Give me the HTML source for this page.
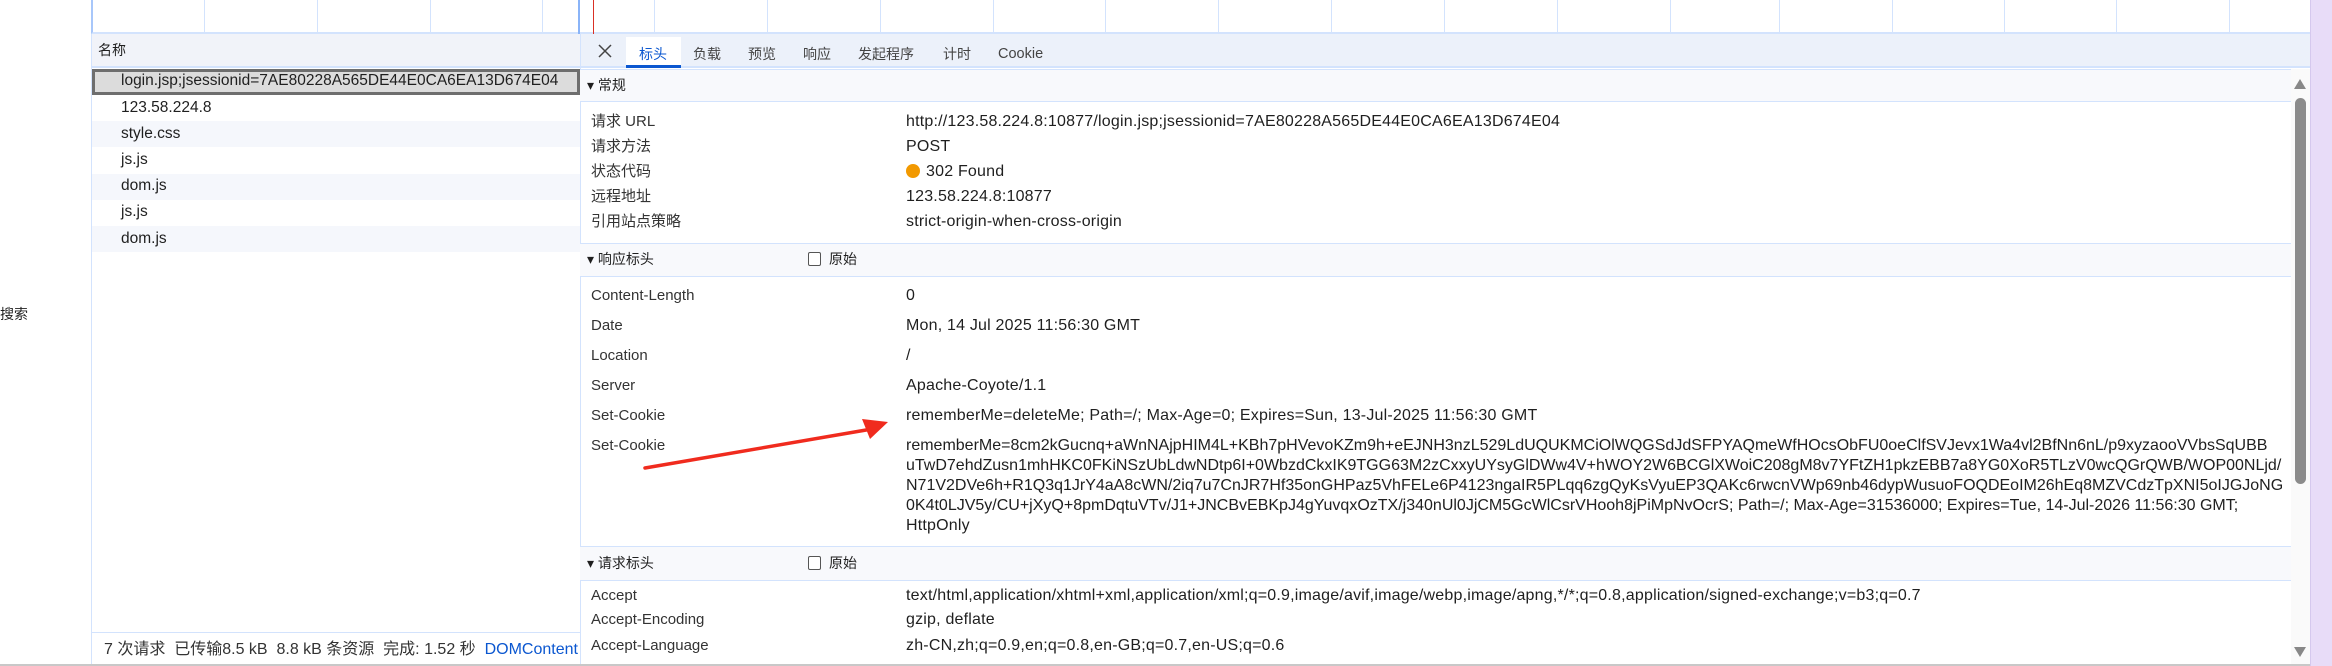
<!DOCTYPE html>
<html><head><meta charset="utf-8"><style>
*{margin:0;padding:0;box-sizing:border-box}
body{width:2332px;height:666px;overflow:hidden;background:#fff;font-family:"Liberation Sans","Noto Sans CJK SC",sans-serif;font-size:15px;color:#1f1f1f;position:relative}
.a{position:absolute;white-space:nowrap;line-height:20px}
.vl{position:absolute;top:0;height:34px;width:1px;background:#d3e3fd}
.row{position:absolute;left:92px;width:488px;height:26px}
.lbl{position:absolute;left:591px;white-space:nowrap;font-size:15px;color:#333;line-height:20px}
.val{position:absolute;left:906px;white-space:nowrap;line-height:20px;font-size:16px;letter-spacing:0.2px}
.ck{letter-spacing:0}
.li{font-size:15.5px}
.sec{position:absolute;left:580px;width:1711px;background:#f8f9fc;border-top:1px solid #d3e3fd;border-bottom:1px solid #d3e3fd}
.cb{position:absolute;width:13px;height:14px;border:1.5px solid #555;border-radius:2px;background:#fff}
</style></head><body>
<div class="a" style="left:0;top:304px;font-size:14px">搜索</div>
<div style="position:absolute;left:91px;top:0;width:2219px;height:34px;border-left:2px solid #a8c7fa;border-bottom:2px solid #d3e3fd"></div>
<div class="vl" style="left:204px"></div><div class="vl" style="left:317px"></div><div class="vl" style="left:430px"></div><div class="vl" style="left:542px"></div>
<div class="vl" style="left:578px;width:2px;background:#8ab4f8"></div><div class="vl" style="left:593px;background:#d93025"></div>
<div class="vl" style="left:654px"></div><div class="vl" style="left:767px"></div><div class="vl" style="left:880px"></div><div class="vl" style="left:993px"></div><div class="vl" style="left:1105px"></div><div class="vl" style="left:1218px"></div><div class="vl" style="left:1331px"></div><div class="vl" style="left:1444px"></div><div class="vl" style="left:1557px"></div><div class="vl" style="left:1670px"></div><div class="vl" style="left:1779px"></div><div class="vl" style="left:1892px"></div><div class="vl" style="left:2004px"></div><div class="vl" style="left:2116px"></div><div class="vl" style="left:2229px"></div>
<div style="position:absolute;left:91px;top:34px;width:1px;height:632px;background:#d3e3fd"></div>
<div style="position:absolute;left:92px;top:34px;width:488px;height:34px;background:#f1f3f9;border-bottom:2px solid #d3e3fd"></div>
<div class="a" style="left:98px;top:40px;font-size:14px">名称</div>
<div class="row" style="top:69px;background:#dcdcdc;border:3px solid #6e6e6e"></div>
<div class="a li" style="left:121px;top:71px">login.jsp;jsessionid=7AE80228A565DE44E0CA6EA13D674E04</div>
<div class="a li" style="left:121px;top:98px">123.58.224.8</div>
<div class="row" style="top:121px;background:#f5f7fc"></div><div class="a li" style="left:121px;top:124px">style.css</div>
<div class="a li" style="left:121px;top:150px">js.js</div>
<div class="row" style="top:174px;background:#f5f7fc"></div><div class="a li" style="left:121px;top:176px">dom.js</div>
<div class="a li" style="left:121px;top:202px">js.js</div>
<div class="row" style="top:226px;background:#f5f7fc"></div><div class="a li" style="left:121px;top:229px">dom.js</div>
<div style="position:absolute;left:92px;top:632px;width:488px;height:34px;border-top:1px solid #d3e3fd;border-bottom:2px solid #c8c8c8"></div>
<div class="a" style="left:104px;top:640px;font-size:16px;color:#333">7 次请求 &nbsp;已传输8.5 kB &nbsp;8.8 kB 条资源 &nbsp;完成: 1.52 秒 &nbsp;<span style="color:#0b57d0">DOMContent</span></div>
<div style="position:absolute;left:580px;top:34px;width:1px;height:632px;background:#d3e3fd"></div>
<div style="position:absolute;left:581px;top:34px;width:1729px;height:34px;background:#ecf1fa;border-bottom:2px solid #d3e3fd"></div>
<svg style="position:absolute;left:597px;top:43px" width="16" height="16"><path d="M2 2L14 14M14 2L2 14" stroke="#444" stroke-width="1.5"/></svg>
<div style="position:absolute;left:626px;top:37px;width:55px;height:31px;background:#fff;border-bottom:3px solid #0b57d0"></div>
<div class="a" style="left:639px;top:44px;font-size:14px;color:#0b57d0">标头</div>
<div class="a" style="left:693px;top:44px;font-size:14px;color:#444">负载</div>
<div class="a" style="left:748px;top:44px;font-size:14px;color:#444">预览</div>
<div class="a" style="left:803px;top:44px;font-size:14px;color:#444">响应</div>
<div class="a" style="left:858px;top:44px;font-size:14px;color:#444">发起程序</div>
<div class="a" style="left:943px;top:44px;font-size:14px;color:#444">计时</div>
<div class="a" style="left:998px;top:44px;font-size:14.5px;color:#444">Cookie</div>
<div class="sec" style="top:69px;height:33px"></div>
<div class="a" style="left:587px;top:75px;font-size:14px">▾ 常规</div>
<div class="lbl" style="top:112px">请求 URL</div><div class="val" style="top:112px">http://123.58.224.8:10877/login.jsp;jsessionid=7AE80228A565DE44E0CA6EA13D674E04</div>
<div class="lbl" style="top:137px">请求方法</div><div class="val" style="top:137px">POST</div>
<div class="lbl" style="top:162px">状态代码</div><div class="val" style="top:162px"><span style="display:inline-block;width:14px;height:14px;border-radius:50%;background:#f29900;vertical-align:-2px;margin-right:6px"></span>302 Found</div>
<div class="lbl" style="top:187px">远程地址</div><div class="val" style="top:187px">123.58.224.8:10877</div>
<div class="lbl" style="top:212px">引用站点策略</div><div class="val" style="top:212px">strict-origin-when-cross-origin</div>
<div class="sec" style="top:243px;height:34px"></div>
<div class="a" style="left:587px;top:249px;font-size:14px">▾ 响应标头</div>
<div class="cb" style="left:808px;top:252px"></div><div class="a" style="left:829px;top:249px;font-size:14px">原始</div>
<div class="lbl" style="top:286px">Content-Length</div><div class="val" style="top:286px">0</div>
<div class="lbl" style="top:316px">Date</div><div class="val" style="top:316px">Mon, 14 Jul 2025 11:56:30 GMT</div>
<div class="lbl" style="top:346px">Location</div><div class="val" style="top:346px">/</div>
<div class="lbl" style="top:376px">Server</div><div class="val" style="top:376px">Apache-Coyote/1.1</div>
<div class="lbl" style="top:406px">Set-Cookie</div><div class="val" style="top:406px">rememberMe=deleteMe; Path=/; Max-Age=0; Expires=Sun, 13-Jul-2025 11:56:30 GMT</div>
<div class="lbl" style="top:436px">Set-Cookie</div>
<div class="val ck" style="top:436px">rememberMe=8cm2kGucnq+aWnNAjpHIM4L+KBh7pHVevoKZm9h+eEJNH3nzL529LdUQUKMCiOlWQGSdJdSFPYAQmeWfHOcsObFU0oeClfSVJevx1Wa4vl2BfNn6nL/p9xyzaooVVbsSqUBB</div>
<div class="val ck" style="top:456px">uTwD7ehdZusn1mhHKC0FKiNSzUbLdwNDtp6I+0WbzdCkxIK9TGG63M2zCxxyUYsyGlDWw4V+hWOY2W6BCGlXWoiC208gM8v7YFtZH1pkzEBB7a8YG0XoR5TLzV0wcQGrQWB/WOP00NLjd/</div>
<div class="val ck" style="top:476px">N71V2DVe6h+R1Q3q1JrY4aA8cWN/2iq7u7CnJR7Hf35onGHPaz5VhFELe6P4123ngaIR5PLqq6zgQyKsVyuEP3QAKc6rwcnVWp69nb46dypWusuoFOQDEoIM26hEq8MZVCdzTpXNI5oIJGJoNG</div>
<div class="val ck" style="top:496px">0K4t0LJV5y/CU+jXyQ+8pmDqtuVTv/J1+JNCBvEBKpJ4gYuvqxOzTX/j340nUl0JjCM5GcWlCsrVHooh8jPiMpNvOcrS; Path=/; Max-Age=31536000; Expires=Tue, 14-Jul-2026 11:56:30 GMT;</div>
<div class="val" style="top:516px">HttpOnly</div>
<svg style="position:absolute;left:640px;top:415px" width="260" height="60"><path d="M5 53L232 14" stroke="#f02b1e" stroke-width="3.5" stroke-linecap="round"/><path d="M248 7L222 4L230 24Z" fill="#f02b1e"/></svg>
<div class="sec" style="top:546px;height:35px"></div>
<div class="a" style="left:587px;top:553px;font-size:14px">▾ 请求标头</div>
<div class="cb" style="left:808px;top:556px"></div><div class="a" style="left:829px;top:553px;font-size:14px">原始</div>
<div class="lbl" style="top:586px">Accept</div><div class="val" style="top:586px">text/html,application/xhtml+xml,application/xml;q=0.9,image/avif,image/webp,image/apng,*/*;q=0.8,application/signed-exchange;v=b3;q=0.7</div>
<div class="lbl" style="top:610px">Accept-Encoding</div><div class="val" style="top:610px">gzip, deflate</div>
<div class="lbl" style="top:636px">Accept-Language</div><div class="val" style="top:636px">zh-CN,zh;q=0.9,en;q=0.8,en-GB;q=0.7,en-US;q=0.6</div>
<div style="position:absolute;left:2291px;top:69px;width:19px;height:597px;background:#fafafa"></div>
<svg style="position:absolute;left:2293px;top:78px" width="14" height="12"><path d="M7 1L13 11H1Z" fill="#888"/></svg>
<div style="position:absolute;left:2295px;top:98px;width:11px;height:386px;border-radius:6px;background:#8b8b8b"></div>
<svg style="position:absolute;left:2293px;top:646px" width="14" height="12"><path d="M7 11L13 1H1Z" fill="#888"/></svg>
<div style="position:absolute;left:2310px;top:0;width:22px;height:666px;background:#e8dcf8;border-left:1px solid #d5c8ee"></div>
<div style="position:absolute;left:0;top:664px;width:2310px;height:2px;background:#c8c8c8"></div>
</body></html>
